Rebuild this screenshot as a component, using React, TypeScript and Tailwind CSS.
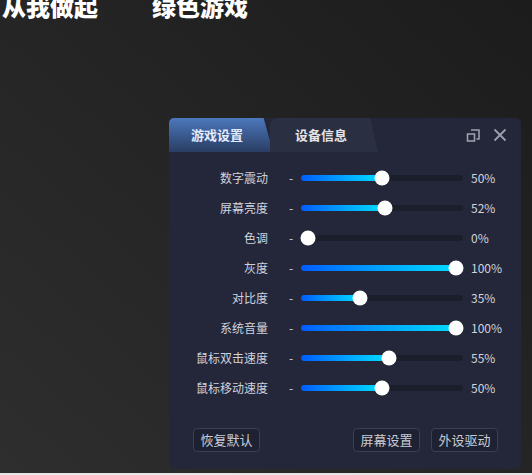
import React from 'react';

const sliders = [
  { label: '数字震动', value: 50 },
  { label: '屏幕亮度', value: 52 },
  { label: '色调', value: 0 },
  { label: '灰度', value: 100 },
  { label: '对比度', value: 35 },
  { label: '系统音量', value: 100 },
  { label: '鼠标双击速度', value: 55 },
  { label: '鼠标移动速度', value: 50 },
];

const font = { fontFamily: '"Noto Sans CJK SC", "Noto Sans", sans-serif' };

const SliderRow: React.FC<{ label: string; value: number }> = ({ label, value }) => {
  // thumb center runs from 7px to 155px on a 162px track
  const center = 7 + (value / 100) * 148;
  return (
    <div className="flex h-[30px] items-center">
      <div className="w-[99px] text-right text-[12px] text-[#cfd3df]">{label}</div>
      <div className="ml-[21px] w-[12px] text-[12px] text-[#cfd3df]">-</div>
      <div className="relative h-[6px] w-[162px] rounded-full bg-[#1b1e2b]">
        <div
          className="h-full rounded-full bg-linear-to-r from-[#005cff] to-[#00dcff]"
          style={{ width: center }}
        />
        <div
          className="absolute top-1/2 h-[15px] w-[15px] -translate-x-1/2 -translate-y-1/2 rounded-full bg-white"
          style={{ left: center }}
        />
      </div>
      <div className="ml-[8px] text-[12px] text-[#d0d4de]">{value}%</div>
    </div>
  );
};

const Button: React.FC<{ children: React.ReactNode }> = ({ children }) => (
  <button className="flex h-[24px] w-[67px] items-center justify-center rounded-[4px] border border-[#3a3f52] bg-[#1d2131] text-[13px] text-[#c8ccd8]">
    {children}
  </button>
);

const App: React.FC = () => {
  return (
    <div className="h-[475px] w-[532px] bg-[#e6e6e6]" style={font}>
      <div className="h-[473px] w-full bg-linear-to-bl from-[#1c1c1c] to-[#2e2e2e]">
        <div className="flex h-[118px] overflow-hidden">
          <div className="-mt-[9px] flex h-[30px] gap-[54px] pl-[2px] text-[24px] font-black leading-[30px] text-white">
            <span>从我做起</span>
            <span>绿色游戏</span>
          </div>
        </div>

        <div className="ml-[169px] flex h-[351px] w-[352px] flex-col rounded-[5px] bg-[#242739]">
          <div className="flex h-[34px] items-stretch">
            <div className="flex w-[104px] items-center rounded-tl-[5px] bg-linear-to-b from-[#4c78bd] to-[#2a3e64] pl-[22px] text-[13px] font-bold text-[#e2ebff] [clip-path:polygon(0_0,91%_0,100%_100%,0_100%)]">
              游戏设置
            </div>
            <div className="-ml-[3px] flex w-[108px] items-center rounded-tl-[8px] bg-[#2b2f42] pl-[25px] text-[13px] font-bold text-[#e4e4e8] [clip-path:polygon(0_0,93%_0,100%_100%,0_100%)]">
              设备信息
            </div>
            <div className="ml-auto flex items-center gap-[12px] pr-[14px]">
              <svg width="15" height="15" viewBox="0 0 15 15" fill="none" stroke="#9aa0ad" strokeWidth="1.6">
                <rect x="1.5" y="6" width="7" height="7" />
                <path d="M5 2h8v9h-2.5" />
              </svg>
              <svg width="14" height="14" viewBox="0 0 14 14" fill="none" stroke="#9aa0ad" strokeWidth="1.8">
                <path d="M1.5 1.5l11 11M12.5 1.5l-11 11" />
              </svg>
            </div>
          </div>

          <div className="flex flex-col pt-[11px]">
            {sliders.map((s) => (
              <SliderRow key={s.label} label={s.label} value={s.value} />
            ))}
          </div>

          <div className="mt-auto flex items-center gap-[11px] pb-[17px] pl-[24px] pr-[23px]">
            <Button>恢复默认</Button>
            <div className="flex-1" />
            <Button>屏幕设置</Button>
            <Button>外设驱动</Button>
          </div>
        </div>
      </div>
    </div>
  );
};

export default App;
